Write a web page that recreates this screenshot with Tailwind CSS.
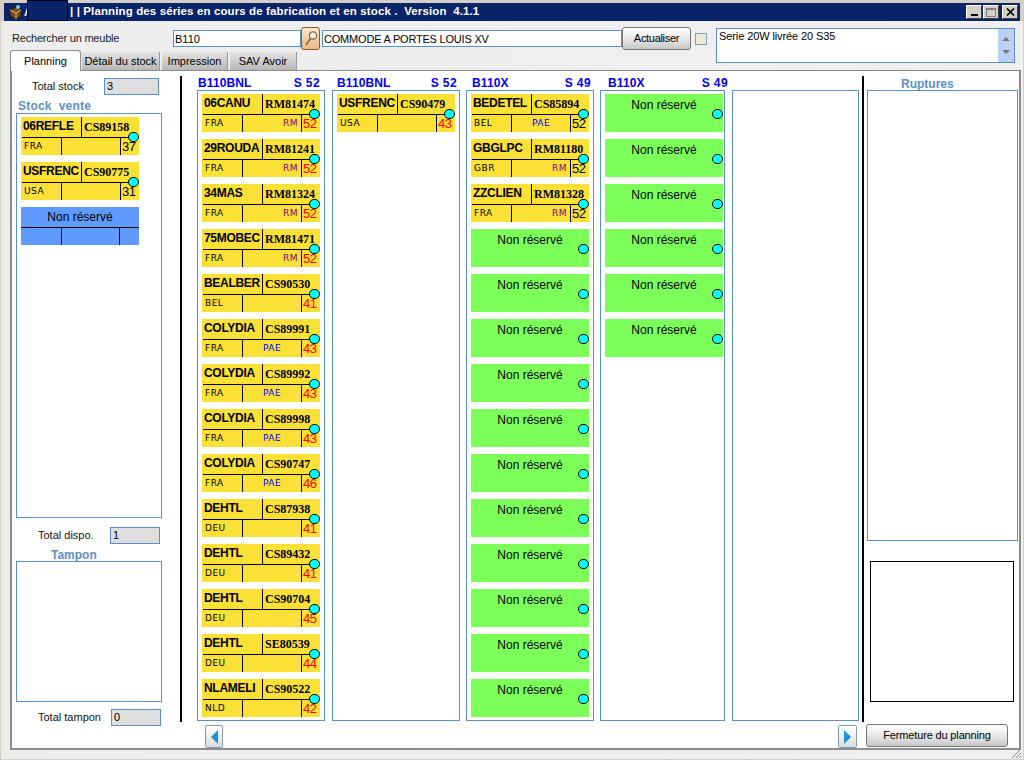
<!DOCTYPE html>
<html lang="fr">
<head>
<meta charset="UTF-8">
<title>Planning des séries</title>
<script src="https://cdn.jsdelivr.net/npm/@tailwindcss/browser@4"></script>
</head>
<body class="m-0 overflow-hidden">
<div class="w-[1024px] h-[760px] bg-[#d4d0c8] overflow-hidden flex flex-col text-[12px] text-black font-['Liberation_Sans',Arial,sans-serif]">

  <!-- title bar -->
  <div class="mt-[3px] mx-[4px] h-[18px] bg-[#0a246a] flex items-center text-white font-bold relative">
    <svg class="ml-[4px] w-[15px] h-[16px]" viewBox="0 0 15 16">
      <path d="M2 6 L8 3 L13 6 L13 12 L8 15 L2 12 Z" fill="#7a4a1e" stroke="#2a1606"/>
      <path d="M2 6 L8 9 L13 6 M8 9 L8 15" fill="none" stroke="#e0c060"/>
      <circle cx="10" cy="3" r="2" fill="#6fd0e0"/>
    </svg>
    <span class="ml-[1px] w-[46px]">A</span>
    <span class="text-[11.5px] tracking-[0.12px] whitespace-pre">| | Planning des séries en cours de fabrication et en stock .  Version  4.1.1</span>
    <div class="absolute left-[23px] -top-[3px] w-[41px] h-[21px] bg-[#0a246a] border border-black"></div>
    <div class="ml-auto mr-[2px] flex gap-[1px]">
      <div class="w-[16px] h-[14px] bg-[#d4d0c8] border border-t-white border-l-white border-r-[#404040] border-b-[#404040] flex items-end justify-center pb-[2px]"><div class="w-[7px] h-[2px] bg-black"></div></div>
      <div class="w-[16px] h-[14px] bg-[#d4d0c8] border border-t-white border-l-white border-r-[#404040] border-b-[#404040] flex items-center justify-center"><div class="w-[10px] h-[9px] border border-t-2 border-[#808080]"></div></div>
      <div class="ml-[2px] w-[16px] h-[14px] bg-[#d4d0c8] border border-t-white border-l-white border-r-[#404040] border-b-[#404040] flex items-center justify-center">
        <svg class="w-[9px] h-[8px]" viewBox="0 0 9 8"><path d="M1 0.5 L8 7.5 M8 0.5 L1 7.5" stroke="#000" stroke-width="1.6"/></svg>
      </div>
    </div>
  </div>

  <!-- client area -->
  <div class="flex-1 mx-[1px] mb-[2px] bg-gradient-to-r from-[#ededed] to-[#f0f0f0] flex flex-col">
    <!-- toolbar + tabs -->
    <div class="h-[49px] flex items-start relative">
      <div class="w-[715px] shrink-0 flex flex-col">
        <div class="flex items-center h-[25px] mt-[5px] text-[11px]">
          <span class="ml-[11px] w-[161px] tracking-[-0.2px] text-[#222]">Rechercher un meuble</span>
          <input value="B110" class="w-[128px] h-[17px] bg-white border border-[#5b8fc9] px-[1px] outline-none">
          <button class="w-[19px] h-[23px] rounded-[3px] border border-[#8a5a30] bg-gradient-to-b from-[#fbe6c8] to-[#e8b880] flex items-center justify-center">
            <svg class="w-[14px] h-[18px]" viewBox="0 0 14 18"><circle cx="9" cy="5.5" r="3.6" fill="#f8f0e4" stroke="#806850" stroke-width="1.2"/><path d="M6.5 8.5 L2 15" stroke="#806850" stroke-width="1.6"/></svg>
          </button>
          <input value="COMMODE A PORTES LOUIS XV" class="ml-[2px] w-[300px] h-[17px] bg-white border border-[#5b8fc9] px-[1px] tracking-[-0.2px] outline-none">
          <button class="w-[69px] h-[23px] rounded-[3px] border border-[#777] bg-gradient-to-b from-white via-[#e8e8e8] to-[#c8c8c8] tracking-[-0.3px]">Actualiser</button>
          <div class="ml-[4px] w-[12px] h-[12px] bg-[#ece9d8] border border-[#7f9db9]"></div>
        </div>
        <div class="flex items-end h-[19px] ml-[9px] relative z-10 text-[11px]">
          <div class="w-[71px] h-[21px] -mb-[1px] bg-white border border-b-0 border-[#919191] rounded-t-[3px] flex items-center justify-center">Planning</div>
          <div class="ml-[1px] w-[78px] h-[18px] bg-gradient-to-b from-[#e4e4e4] to-[#b8b8b8] border-r border-[#999] flex items-center justify-center">Détail du stock</div>
          <div class="ml-[2px] w-[66px] h-[18px] bg-gradient-to-b from-[#e4e4e4] to-[#b8b8b8] border-r border-[#999] flex items-center justify-center">Impression</div>
          <div class="ml-[2px] w-[67px] h-[18px] bg-gradient-to-b from-[#e4e4e4] to-[#b8b8b8] border-r border-[#999] flex items-center justify-center">SAV Avoir</div>
        </div>
      </div>
      <div class="mt-[7px] w-[299px] h-[35px] bg-white border border-[#5b8fc9] flex relative z-10">
        <div class="flex-1 px-[2px] text-[11px] tracking-[-0.1px] leading-[15px]">Serie 20W livrée 20 S35</div>
        <div class="w-[16px] bg-[#b9d1f4] flex flex-col items-center justify-around py-[3px]">
          <div class="w-0 h-0 border-x-[4px] border-x-transparent border-b-[4px] border-b-[#777]"></div>
          <div class="w-0 h-0 border-x-[4px] border-x-transparent border-t-[4px] border-t-[#777]"></div>
        </div>
      </div>
    </div>

    <!-- tab pane -->
    <div class="ml-[9px] mr-[2px] h-[680px] bg-white border-2 border-t border-[#8c8c8c] flex items-start">
      <!-- left column -->
      <div class="w-[168px] shrink-0 flex flex-col">
        <div class="mt-[7px] flex items-center h-[17px] text-[11px]">
          <span class="ml-[20px] w-[72px] text-[#111]">Total stock</span>
          <div class="w-[55px] h-[17px] bg-[#dedede] border border-[#5b8fc9] px-[2px] leading-[15px]">3</div>
        </div>
        <div class="mt-[4px] ml-[6px] h-[14px] font-bold text-[#5b8fc9] tracking-[0.2px] whitespace-pre leading-[14px]">Stock  vente</div>
        <div id="stock" class="ml-[4px] w-[146px] h-[405px] border border-[#5b8fc9] pt-[3px] pl-[4px] flex flex-col gap-[7px]"></div>
        <div class="mt-[9px] flex items-center h-[17px] text-[11px]">
          <span class="ml-[26px] w-[72px] text-[#111]">Total dispo.</span>
          <div class="w-[50px] h-[17px] bg-[#dedede] border border-[#5b8fc9] px-[2px] leading-[15px]">1</div>
        </div>
        <div class="ml-[39px] h-[17px] font-bold text-[#5b8fc9] leading-[22px]">Tampon</div>
        <div class="ml-[4px] w-[146px] h-[141px] border border-[#5b8fc9]"></div>
        <div class="mt-[7px] flex items-center h-[17px] text-[11px]">
          <span class="ml-[26px] w-[73px] text-[#111]">Total tampon</span>
          <div class="w-[50px] h-[17px] bg-[#dedede] border border-[#5b8fc9] px-[2px] leading-[15px]">0</div>
        </div>
      </div>

      <!-- planning columns -->
      <div class="w-[684px] shrink-0 flex flex-col">
        <div id="columns" class="mt-[5px] h-[646px] border-x-2 border-black flex pl-[15px] gap-[6px]"></div>
        <div class="mt-[3px] h-[24px] flex justify-between pl-[25px] pr-[7px]">
          <button class="w-[18px] h-[23px] rounded-[2px] border border-[#7f9db9] bg-gradient-to-b from-white to-[#dcdcdc] flex items-center justify-center">
            <div class="w-0 h-0 border-y-[7px] border-y-transparent border-r-[7px] border-r-[#1b95d8]"></div>
          </button>
          <button class="w-[19px] h-[23px] rounded-[2px] border border-[#7f9db9] bg-gradient-to-b from-white to-[#dcdcdc] flex items-center justify-center">
            <div class="w-0 h-0 border-y-[7px] border-y-transparent border-l-[7px] border-l-[#1b95d8]"></div>
          </button>
        </div>
      </div>

      <!-- right column -->
      <div class="w-[154px] shrink-0 flex flex-col">
        <div class="mt-[5px] h-[14px] pl-[37px] pt-[1px] font-bold text-[#5b8fc9] leading-[14px]">Ruptures</div>
        <div class="ml-[3px] w-[151px] h-[451px] border border-[#5b8fc9]"></div>
        <div class="mt-[20px] ml-[6px] w-[144px] h-[141px] border border-black"></div>
        <button class="mt-[22px] ml-[2px] w-[142px] h-[23px] rounded-[3px] border border-[#777] bg-gradient-to-b from-white via-[#e8e8e8] to-[#c8c8c8] text-[11px] tracking-[-0.15px]">Fermeture du planning</button>
      </div>
    </div>

    <div class="h-[9px] relative">
      <svg class="absolute right-[1px] bottom-0 w-[12px] h-[12px]" viewBox="0 0 12 12"><path d="M11 2 L2 11 M11 6 L6 11 M11 9 L9 11" stroke="#888" stroke-width="1"/></svg>
    </div>
  </div>
</div>

<script>
  function dot() {
    return `<div class="absolute left-[107px] top-[15px] w-[11px] h-[10px] rounded-full bg-[#00ffff] border border-black"></div>`;
  }

  function card(c) {
    const site = c.site === "RM"
      ? `<span class="w-full text-right pr-[3px] text-[#800080] text-[9px] tracking-[0.5px] font-['DejaVu_Sans',sans-serif]">RM</span>`
      : `<span class="w-full text-center text-[#0000ff] text-[9px] tracking-[0.5px] font-['DejaVu_Sans',sans-serif]">${c.site || ""}</span>`;
    const num = c.black ? "text-black" : "text-[#ff0000]";
    return `<div class="relative w-[118px] h-[38px] shrink-0 bg-[#fbe035]">
      <div class="h-[21px] ml-[1px] flex border-b border-black">
        <div class="w-[60px] pl-[1px] font-bold tracking-[-0.3px] leading-[18px] border-r border-black whitespace-nowrap">${c.name}</div>
        <div class="pl-[2px] font-bold leading-[21px] font-['Liberation_Serif',serif] whitespace-nowrap">${c.code}</div>
      </div>
      <div class="h-[17px] flex">
        <div class="w-[41px] pl-[3px] border-r border-black text-[9px] tracking-[0.5px] leading-[16px] font-['DejaVu_Sans',sans-serif]">${c.country}</div>
        <div class="w-[58px] flex leading-[16px]">${site}</div>
        <div class="border-l border-black pl-[1px] text-[13px] leading-[17px] tracking-[-0.4px] ${num}">${c.week}</div>
      </div>${dot()}</div>`;
  }

  function free() {
    return `<div class="relative w-[118px] h-[38px] shrink-0 bg-[#7dff5a] text-center leading-[22px]">Non réservé${dot()}</div>`;
  }

  const blue = `<div class="w-[118px] h-[38px] shrink-0 bg-[#5f9aff]">
    <div class="h-[21px] text-center leading-[20px] border-b border-black">Non réservé</div>
    <div class="h-[17px] flex"><div class="w-[41px] border-r border-black"></div><div class="w-[58px] border-r border-black"></div></div></div>`;

  const fromRows = rows => rows.map(r => {
    const [name, code, country, site, week, black] = r.split("|");
    return { name, code, country, site, week, black: !!black };
  });

  document.getElementById("stock").innerHTML =
    fromRows(["06REFLE|CS89158|FRA||37|1", "USFRENC|CS90775|USA||31|1"]).map(card).join("") + blue;

  const columns = [
    { box: "w-[128px]", head: "pl-[1px] pr-[5px]", title: "B110BNL", week: "S 52", rows: [
      "06CANU|RM81474|FRA|RM|52", "29ROUDA|RM81241|FRA|RM|52", "34MAS|RM81324|FRA|RM|52", "75MOBEC|RM81471|FRA|RM|52",
      "BEALBER|CS90530|BEL||41", "COLYDIA|CS89991|FRA|PAE|43", "COLYDIA|CS89992|FRA|PAE|43", "COLYDIA|CS89998|FRA|PAE|43",
      "COLYDIA|CS90747|FRA|PAE|46", "DEHTL|CS87938|DEU||41", "DEHTL|CS89432|DEU||41", "DEHTL|CS90704|DEU||45",
      "DEHTL|SE80539|DEU||44", "NLAMELI|CS90522|NLD||42"] },
    { box: "w-[128px] ml-[1px]", head: "pl-[5px] pr-[3px]", title: "B110BNL", week: "S 52", rows: ["USFRENC|CS90479|USA||43"] },
    { box: "w-[128px]", head: "pl-[6px] pr-[3px]", title: "B110X", week: "S 49", free: 11, rows: [
      "BEDETEL|CS85894|BEL|PAE|52|1", "GBGLPC|RM81180|GBR|RM|52|1", "ZZCLIEN|RM81328|FRA|RM|52|1"] },
    { box: "w-[125px]", head: "pl-[8px] -mr-[3px]", title: "B110X", week: "S 49", free: 6, rows: [] },
    { box: "w-[127px] ml-[1px]", head: "", title: "", week: "", rows: [] }
  ];

  document.getElementById("columns").innerHTML = columns.map(col =>
    `<div class="${col.box} shrink-0 flex flex-col">
      <div class="h-[14px] flex justify-between items-end text-[#0000ff] font-bold leading-[14px] tracking-[0.1px] whitespace-pre ${col.head}"><span>${col.title}</span><span class="tracking-[0.4px]">${col.week}</span></div>
      <div class="h-[631px] border border-[#5b8fc9] pt-[3px] pl-[4px] flex flex-col gap-[7px] overflow-hidden">
        ${fromRows(col.rows).map(card).join("")}${free().repeat(col.free || 0)}
      </div></div>`
  ).join("");
</script>
</body>
</html>
